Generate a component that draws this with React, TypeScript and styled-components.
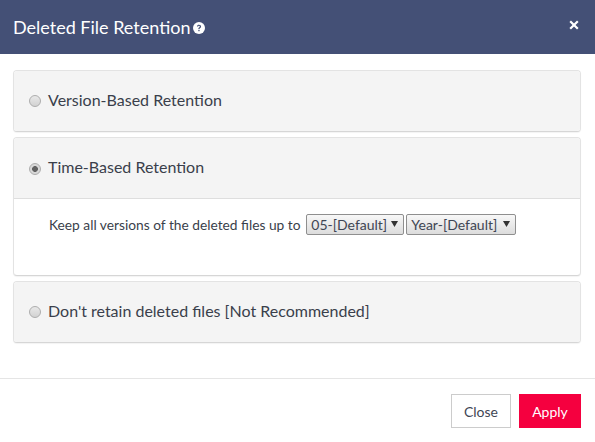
import React from 'react';
import styled, { createGlobalStyle } from 'styled-components';

const Global = createGlobalStyle`
  html, body { margin: 0; padding: 0; background: #fff; }
  body { font-family: Lato, "Liberation Sans", sans-serif; color: #3a3f4b; }
`;

const Modal = styled.div`
  width: 595px;
  height: 442px;
  display: flex;
  flex-direction: column;
  background: #fff;
  overflow: hidden;
`;

const Header = styled.header`
  height: 54px;
  flex: none;
  box-sizing: border-box;
  padding: 0 13px;
  background: #445076;
  color: #fff;
  display: flex;
  align-items: center;
  justify-content: space-between;
`;

const Title = styled.h1`
  margin: 0;
  font-size: 18px;
  font-weight: 400;
  display: flex;
  align-items: center;
  gap: 3px;
`;

const CloseX = styled.button`
  border: 0;
  padding: 0;
  background: none;
  width: 12px;
  height: 12px;
  margin-top: -4px;
  margin-right: 2px;
  display: flex;
`;

const Body = styled.main`
  flex: 1;
  padding: 16px 14px 0 13px;
  display: flex;
  flex-direction: column;
  gap: 5px;
`;

const Panel = styled.section`
  border: 1px solid #e3e3e3;
  border-bottom-color: #d6d6d6;
  border-radius: 4px;
  background: #fff;
  box-shadow: 0 1px 1px rgba(0, 0, 0, 0.05);
  overflow: hidden;
`;

const PanelHead = styled.label<{ $bordered?: boolean }>`
  height: ${p => p.$bordered ? 61 : 60}px;
  box-sizing: border-box;
  background: #f4f4f4;
  padding: 0 15px ${p => p.$bordered ? 3 : 4}px;
  display: flex;
  align-items: center;
  gap: 7px;
  font-size: 16px;
  color: #3a3f4b;
  ${p => p.$bordered ? 'border-bottom: 1px solid #dedede;' : ''}
`;

const Radio = styled.span<{ $on?: boolean }>`
  width: 12px;
  height: 12px;
  margin-top: 4px;
  box-sizing: border-box;
  flex: none;
  border-radius: 50%;
  border: 1px solid #adadad;
  background: ${p => p.$on
    ? 'radial-gradient(circle, #626262 0 2.6px, #d8d8d8 3.2px)'
    : 'linear-gradient(#e8e8e8, #d2d2d2)'};
`;

const PanelBody = styled.div`
  height: 76px;
  box-sizing: border-box;
  padding: 15px 35px 0;
  display: flex;
  align-items: flex-start;
  font-size: 13.75px;
  color: #3a3f4b;
`;

const RowText = styled.span`
  line-height: 21px;
  margin-right: 5.8px;
`;

const Select = styled.div<{ $w: number }>`
  width: ${p => p.$w}px;
  height: 21px;
  box-sizing: border-box;
  margin-right: 2px;
  padding: 0 4px;
  border: 1px solid #8f8f8f;
  border-radius: 2px;
  background: linear-gradient(#f8f8f8, #dcdcdc);
  display: flex;
  align-items: center;
  justify-content: space-between;
  font-size: 14px;
  color: #3f4654;
`;

const Caret = styled.svg`
  width: 7px;
  height: 6px;
  margin: 0 1px 1px 0;
  flex: none;
`;

const Footer = styled.footer`
  height: 64px;
  flex: none;
  box-sizing: border-box;
  border-top: 1px solid #e5e5e5;
  padding: 15px 14px 0 0;
  display: flex;
  justify-content: flex-end;
  gap: 8px;
`;

const Button = styled.button<{ $primary?: boolean }>`
  height: 34px;
  width: ${p => p.$primary ? 62 : 60}px;
  padding: 0;
  font-family: inherit;
  font-size: 14px;
  border: 1px solid ${p => p.$primary ? '#f5003f' : '#cccccc'};
  background: ${p => p.$primary ? '#f5003f' : '#fff'};
  color: ${p => p.$primary ? '#fff' : '#3f4654'};
`;

const Help = () => (
  <svg width="12" height="12" viewBox="0 0 12 12" style={{ marginTop: 2 }}>
    <circle cx="6" cy="6" r="6" fill="#fff" />
    <path d="M3.9 4.6C4 3.4 4.9 2.8 6 2.8c1.2 0 2.1.7 2.1 1.7 0 1.6-1.6 1.4-1.6 2.6H5.3c0-1.8 1.5-1.7 1.5-2.6 0-.4-.3-.7-.8-.7-.5 0-.8.3-.9.8z" fill="#445076" />
    <rect x="5.3" y="7.8" width="1.3" height="1.4" fill="#445076" />
  </svg>
);

const Dropdown = ({ label, w }: { label: string; w: number }) => (
  <Select $w={w}>
    <span>{label}</span>
    <Caret viewBox="0 0 7 6"><path d="M0 0h7L3.5 6z" fill="#333" /></Caret>
  </Select>
);

export default function App() {
  return (
    <Modal>
      <Global />
      <Header>
        <Title>Deleted File Retention <Help /></Title>
        <CloseX aria-label="Close">
          <svg width="12" height="12" viewBox="0 0 12 12">
            <path d="M2.2 2.2l7.6 7.6M9.8 2.2l-7.6 7.6" stroke="#fff" strokeWidth="2.2" />
          </svg>
        </CloseX>
      </Header>
      <Body>
        <Panel>
          <PanelHead><Radio />Version-Based Retention</PanelHead>
        </Panel>
        <Panel>
          <PanelHead $bordered><Radio $on />Time-Based Retention</PanelHead>
          <PanelBody>
            <RowText>Keep all versions of the deleted files up to</RowText>
            <Dropdown label="05-[Default]" w={98} />
            <Dropdown label="Year-[Default]" w={110} />
          </PanelBody>
        </Panel>
        <Panel>
          <PanelHead><Radio />Don't retain deleted files [Not Recommended]</PanelHead>
        </Panel>
      </Body>
      <Footer>
        <Button>Close</Button>
        <Button $primary>Apply</Button>
      </Footer>
    </Modal>
  );
}
